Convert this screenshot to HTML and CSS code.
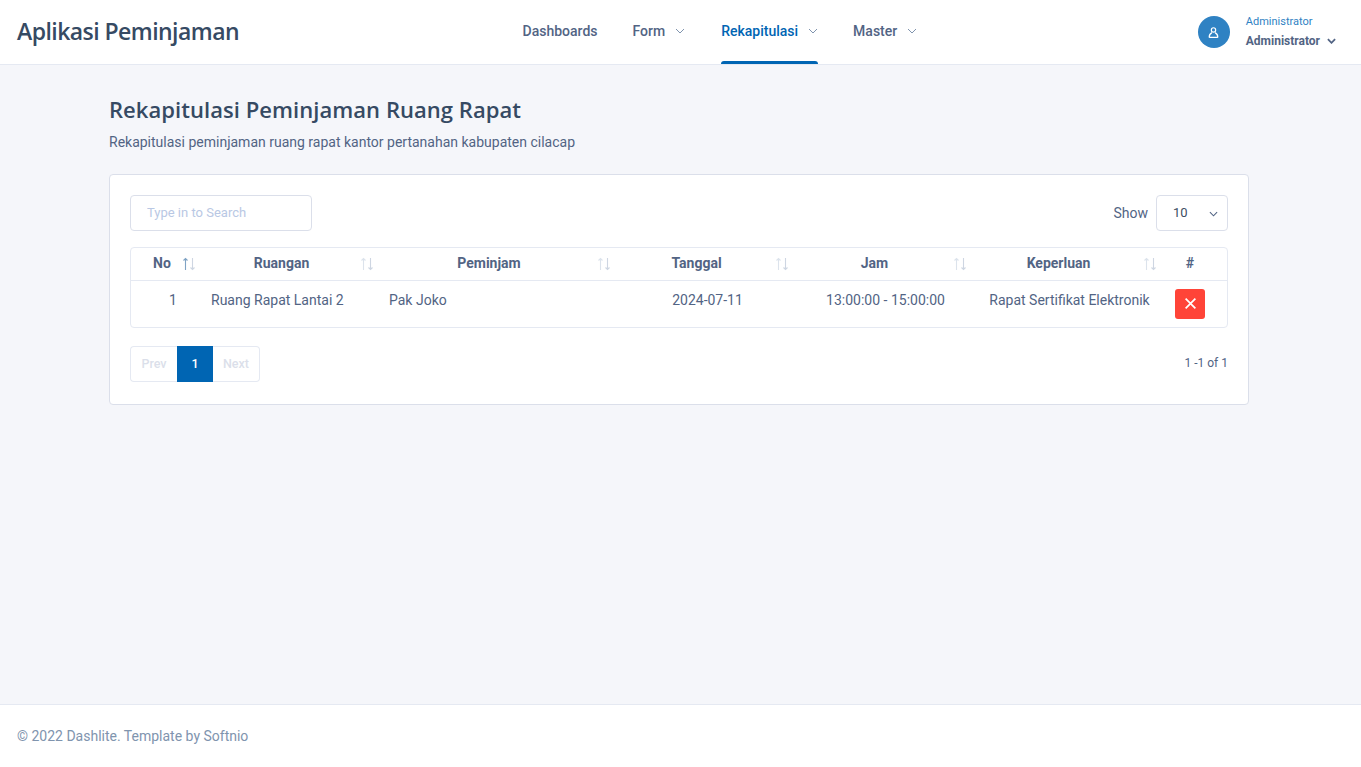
FILE: index.html
```html
<!DOCTYPE html>
<html lang="en">

<head>
    <meta charset="UTF-8">
    <meta name="viewport" content="width=device-width, initial-scale=1.0">
    <title>Aplikasi Peminjaman</title>
    <link rel="stylesheet" href="styles.css">
</head>

<body>
    <header class="topbar">
        <div class="brand">Aplikasi Peminjaman</div>
        <nav class="menu">
            <a class="menu-link">Dashboards</a>
            <a class="menu-link">Form
                <svg class="menu-caret" viewBox="0 0 10 6"><path d="M1 1l4 4 4-4" /></svg>
            </a>
            <a class="menu-link active">Rekapitulasi
                <svg class="menu-caret" viewBox="0 0 10 6"><path d="M1 1l4 4 4-4" /></svg>
            </a>
            <a class="menu-link">Master
                <svg class="menu-caret" viewBox="0 0 10 6"><path d="M1 1l4 4 4-4" /></svg>
            </a>
        </nav>
        <div class="user">
            <div class="user-avatar">
                <svg viewBox="0 0 12 12"><circle cx="6" cy="3.6" r="2" /><path d="M2 10.500c0-2.500 1.300-3.800 2.600-4.400M10 10.500c0-2.500-1.300-3.800-2.600-4.400M2 10.500h8" /></svg>
            </div>
            <div class="user-info">
                <div class="user-role">Administrator</div>
                <div class="user-name">Administrator
                    <svg class="user-caret" viewBox="0 0 10 6"><path d="M1 1l4 4 4-4" /></svg>
                </div>
            </div>
        </div>
    </header>

    <main class="content">
        <h1>Rekapitulasi Peminjaman Ruang Rapat</h1>
        <p class="subtitle">Rekapitulasi peminjaman ruang rapat kantor pertanahan kabupaten cilacap</p>

        <div class="card">
            <div class="toolbar">
                <input class="search" type="text" placeholder="Type in to Search">
                <div class="show">
                    <span>Show</span>
                    <div class="select">10
                        <svg class="select-caret" viewBox="0 0 10 6"><path d="M1 1l4 4 4-4" /></svg>
                    </div>
                </div>
            </div>

            <div class="table-wrap">
                <table>
                    <colgroup>
                        <col class="col-no">
                        <col class="col-ruangan">
                        <col class="col-peminjam">
                        <col class="col-tanggal">
                        <col class="col-jam">
                        <col class="col-keperluan">
                        <col class="col-aksi">
                    </colgroup>
                    <thead>
                        <tr>
                            <th class="sortable th-no">No
                                <svg class="sort" viewBox="0 0 14 14"><path class="up on" d="M3.500 13V1.500M1.500 3.500l2-2 2 2" /><path class="down" d="M10.500 1v11.500M8.500 10.500l2 2 2-2" /></svg>
                            </th>
                            <th class="sortable">Ruangan
                                <svg class="sort" viewBox="0 0 14 14"><path class="up" d="M3.500 13V1.500M1.500 3.500l2-2 2 2" /><path class="down" d="M10.500 1v11.500M8.500 10.500l2 2 2-2" /></svg>
                            </th>
                            <th class="sortable">Peminjam
                                <svg class="sort" viewBox="0 0 14 14"><path class="up" d="M3.500 13V1.500M1.500 3.500l2-2 2 2" /><path class="down" d="M10.500 1v11.500M8.500 10.500l2 2 2-2" /></svg>
                            </th>
                            <th class="sortable">Tanggal
                                <svg class="sort" viewBox="0 0 14 14"><path class="up" d="M3.500 13V1.500M1.500 3.500l2-2 2 2" /><path class="down" d="M10.500 1v11.500M8.500 10.500l2 2 2-2" /></svg>
                            </th>
                            <th class="sortable">Jam
                                <svg class="sort" viewBox="0 0 14 14"><path class="up" d="M3.500 13V1.500M1.500 3.500l2-2 2 2" /><path class="down" d="M10.500 1v11.500M8.500 10.500l2 2 2-2" /></svg>
                            </th>
                            <th class="sortable">Keperluan
                                <svg class="sort" viewBox="0 0 14 14"><path class="up" d="M3.500 13V1.500M1.500 3.500l2-2 2 2" /><path class="down" d="M10.500 1v11.500M8.500 10.500l2 2 2-2" /></svg>
                            </th>
                            <th class="hash">#</th>
                        </tr>
                    </thead>
                    <tbody>
                        <tr>
                            <td class="cell-no">1</td>
                            <td class="cell-left">Ruang Rapat Lantai 2</td>
                            <td class="cell-left">Pak Joko</td>
                            <td class="cell-mid">2024-07-11</td>
                            <td class="cell-mid">13:00:00 - 15:00:00</td>
                            <td class="cell-mid">Rapat Sertifikat Elektronik</td>
                            <td class="cell-action">
                                <button class="btn-delete" type="button">
                                    <svg viewBox="0 0 12 12"><path d="M1.500 1.500l9 9M10.500 1.500l-9 9" /></svg>
                                </button>
                            </td>
                        </tr>
                    </tbody>
                </table>
            </div>

            <div class="table-foot">
                <div class="pager">
                    <a class="page-item">Prev</a>
                    <a class="page-item current">1</a>
                    <a class="page-item">Next</a>
                </div>
                <div class="page-info">1 -1 of 1</div>
            </div>
        </div>
    </main>

    <footer class="footer">© 2022 Dashlite. Template by Softnio</footer>
</body>

</html>
```

FILE: styles.css
```css
* {
    box-sizing: border-box;
}

body {
    margin: 0;
    min-height: 767px;
    display: flex;
    flex-direction: column;
    font-family: Roboto, sans-serif;
    font-size: 14px;
    line-height: 22px;
    color: #526484;
    background-color: #f5f6fa;
}

/* header */
.topbar {
    height: 65px;
    padding: 0 25px 0 17px;
    display: flex;
    align-items: center;
    justify-content: space-between;
    background-color: #fff;
    border-bottom: 1px solid #e5e9f2;
}

.brand {
    width: 222px;
    padding-bottom: 2px;
    font-family: "Open Sans", sans-serif;
    font-size: 23px;
    font-weight: 600;
    letter-spacing: -0.55px;
    white-space: nowrap;
    color: #364a63;
}

.menu {
    display: flex;
    height: 64px;
    gap: 35px;
    margin-left: 4px;
}

.menu-link {
    position: relative;
    display: flex;
    align-items: center;
    gap: 10px;
    height: 64px;
    padding-bottom: 3px;
    font-weight: 500;
    color: #526484;
}

.menu-link.active {
    color: #0065b3;
}

.menu-link.active::after {
    content: "";
    position: absolute;
    left: 0;
    right: 0;
    bottom: 0;
    height: 3px;
    background-color: #0065b3;
    border-radius: 3px 3px 0 0;
}

.menu-caret {
    width: 10px;
    height: 6px;
    margin-right: 1px;
    margin-top: 1px;
    fill: none;
    stroke: #8094ae;
    stroke-width: 1;
}

.menu-link.active .menu-caret {
    margin-right: 0;
}

.user {
    display: flex;
    align-items: center;
    gap: 16px;
}

.user-avatar {
    width: 32px;
    height: 32px;
    border-radius: 50%;
    display: flex;
    align-items: center;
    justify-content: center;
    background-color: #2f82c3;
}

.user-avatar svg {
    width: 13px;
    height: 13px;
    fill: none;
    stroke: #fff;
    stroke-width: 1.100;
}

.user-info {
    padding-bottom: 2px;
}

.user-role {
    font-size: 11px;
    line-height: 20px;
    color: #2f82c3;
}

.user-name {
    font-size: 12px;
    line-height: 18px;
    font-weight: 700;
    color: #526484;
    display: flex;
    align-items: center;
    gap: 7px;
}

.user-caret {
    width: 9px;
    height: 6px;
    fill: none;
    stroke: #526484;
    stroke-width: 2;
}

/* page */
.content {
    flex: 1;
    width: 1140px;
    margin-left: 109px;
    padding-top: 30px;
}

h1 {
    margin: 0;
    font-family: "Open Sans", sans-serif;
    font-size: 22px;
    line-height: 28px;
    font-weight: 600;
    letter-spacing: 0.05px;
    color: #364a63;
}

.subtitle {
    margin: 7px 0 0;
    line-height: 24px;
    color: #526484;
}

.card {
    margin-top: 20px;
    padding: 20px 20px 22px;
    background-color: #fff;
    border: 1px solid #dbdfea;
    border-radius: 4px;
}

.toolbar {
    display: flex;
    justify-content: space-between;
    align-items: center;
    margin-bottom: 16px;
}

.search {
    width: 182px;
    height: 36px;
    padding: 0 16px 2px;
    font-family: Roboto, sans-serif;
    font-size: 13px;
    color: #526484;
    border: 1px solid #dbdfea;
    border-radius: 4px;
    outline: none;
}

.search::placeholder {
    color: #b9c8e4;
    opacity: 1;
}

.show {
    display: flex;
    align-items: center;
    gap: 8px;
}

.select {
    position: relative;
    width: 72px;
    height: 36px;
    padding-left: 16px;
    display: flex;
    align-items: center;
    font-size: 13px;
    color: #3c4d62;
    border: 1px solid #dbdfea;
    border-radius: 4px;
}

.select-caret {
    position: absolute;
    right: 9px;
    top: 15px;
    width: 9px;
    height: 6px;
    fill: none;
    stroke: #526484;
    stroke-width: 1.200;
}

.table-wrap {
    border: 1px solid #e5e9f2;
    border-radius: 4px;
}

table {
    width: 1096px;
    table-layout: fixed;
    border-collapse: collapse;
}

.col-no { width: 69px; }
.col-ruangan { width: 178px; }
.col-peminjam { width: 237px; }
.col-tanggal { width: 178px; }
.col-jam { width: 178px; }
.col-keperluan { width: 190px; }
.col-aksi { width: 66px; }

th {
    position: relative;
    height: 32px;
    padding: 0 27px 1px 12px;
    font-weight: 700;
    text-align: center;
    color: #526484;
    border-bottom: 1px solid #e5e9f2;
}

th.th-no {
    padding-left: 20px;
}

th.hash {
    padding: 0 18px 1px 10px;
}

.sort {
    position: absolute;
    right: 4px;
    top: 9px;
    width: 14px;
    height: 14px;
    fill: none;
    stroke-width: 1.100;
}

.sort .up {
    stroke: #dce3ec;
}

.sort .down {
    stroke: #ced6e2;
}

.sort .on {
    stroke: #7fa3c4;
}

td {
    height: 47px;
    padding: 0 0 7px;
    white-space: nowrap;
}

.cell-no {
    padding-left: 15px;
    text-align: center;
}

.cell-left {
    padding-left: 11px;
}

.cell-mid {
    padding-left: 7px;
    text-align: center;
}

.cell-action {
    padding: 0 0 0 14px;
}

.btn-delete {
    width: 30px;
    height: 30px;
    padding: 0;
    display: flex;
    align-items: center;
    justify-content: center;
    background-color: #ff4438;
    border: none;
    border-radius: 3px;
}

.btn-delete svg {
    width: 13px;
    height: 13px;
    fill: none;
    stroke: #fff;
    stroke-width: 1.600;
}

.table-foot {
    display: flex;
    justify-content: space-between;
    align-items: center;
    margin-top: 18px;
}

.pager {
    display: flex;
}

.page-item {
    height: 36px;
    width: 47px;
    display: flex;
    align-items: center;
    justify-content: center;
    font-size: 12.5px;
    font-weight: 500;
    color: #dbdfea;
    border: 1px solid #e5e9f2;
}

.page-item:first-child {
    border-right: none;
    border-radius: 4px 0 0 4px;
}

.page-item:last-child {
    border-left: none;
    border-radius: 0 4px 4px 0;
}

.page-item.current {
    width: 36px;
    color: #fff;
    background-color: #0065b3;
    border-color: #0065b3;
}

.page-info {
    font-size: 12px;
    color: #526484;
    padding-bottom: 2px;
}

/* footer */
.footer {
    height: 63px;
    padding: 20px 17px 0;
    color: #8094ae;
    background-color: #fff;
    border-top: 1px solid #e5e9f2;
}
```
